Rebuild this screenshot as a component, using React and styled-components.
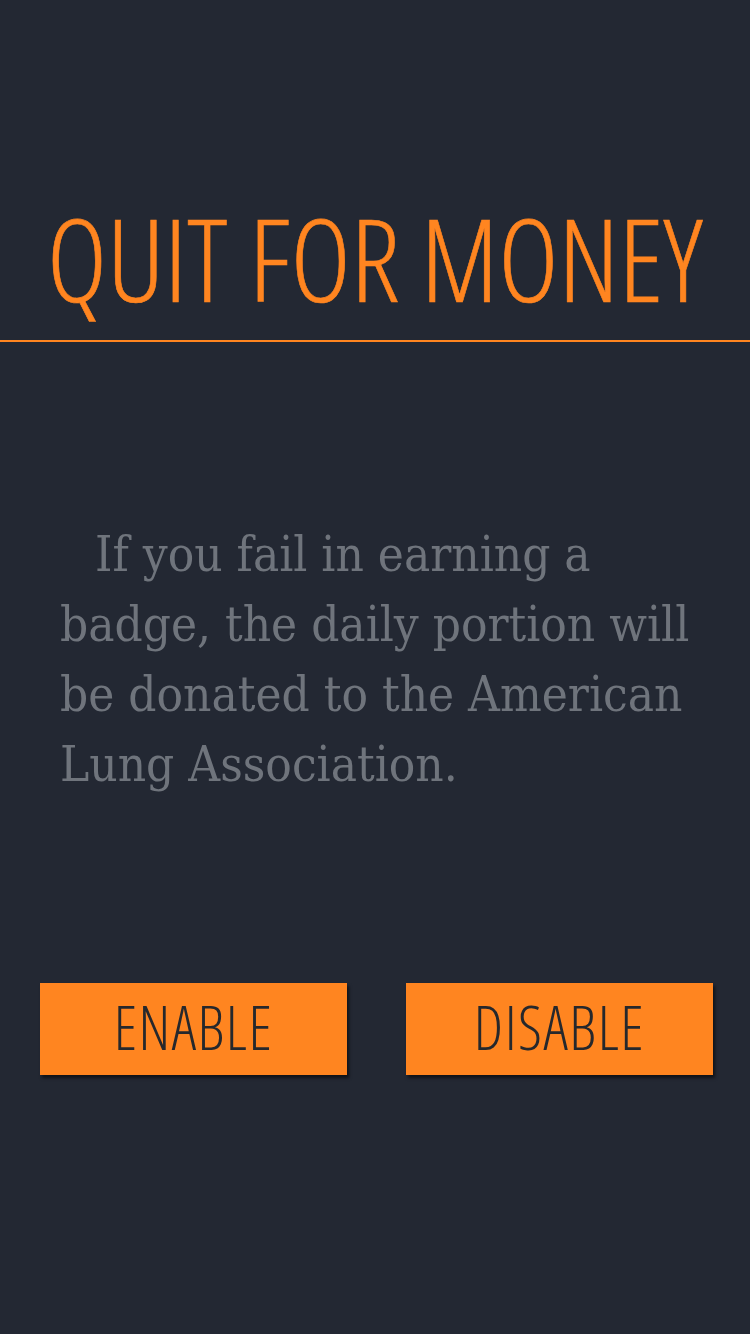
import styled, { createGlobalStyle } from "styled-components";

const GlobalStyle = createGlobalStyle`
  html, body {
    margin: 0;
    padding: 0;
    background-color: #232833;
  }
  * {
    box-sizing: border-box;
  }
`;

function App() {
  return (
    <Screen>
      <GlobalStyle />
      <Header>
        <Title>QUIT FOR MONEY</Title>
      </Header>
      <Description>
        If you fail in earning a badge, the daily portion will be donated to
        the American Lung Association.
      </Description>
      <ButtonRow>
        <ActionButton type="button">ENABLE</ActionButton>
        <ActionButton type="button">DISABLE</ActionButton>
      </ButtonRow>
    </Screen>
  );
}

const Screen = styled.main`
  width: 750px;
  min-height: 1334px;
  background-color: #232833;
  display: flex;
  flex-direction: column;
`;

const Header = styled.header`
  padding: 198px 0 22px;
  border-bottom: 2px solid #ff8520;
  display: flex;
  justify-content: center;
`;

const Title = styled.h1`
  margin: 0;
  font-family: "Open Sans", "DejaVu Sans", sans-serif;
  font-weight: 300;
  font-stretch: condensed;
  font-size: 114px;
  line-height: 120px;
  letter-spacing: 0.2px;
  color: #ff8520;
  white-space: nowrap;
  -webkit-text-stroke: 0.6px #ff8520;
`;

const Description = styled.p`
  margin: 178px 0 0 60px;
  width: 645px;
  font-family: "DejaVu Serif", "Liberation Serif", serif;
  font-stretch: condensed;
  font-size: 49px;
  line-height: 70px;
  text-indent: 35px;
  color: #6f747c;
`;

const ButtonRow = styled.div`
  margin-top: 183px;
  padding: 0 37px 0 40px;
  display: flex;
  justify-content: space-between;
`;

const ActionButton = styled.button`
  width: 307px;
  height: 92px;
  padding: 0 0 4px;
  border: none;
  border-radius: 0;
  background-color: #ff8520;
  box-shadow: 2px 3px 3px rgba(0, 0, 0, 0.55);
  display: flex;
  justify-content: center;
  align-items: center;
  font-family: "Open Sans", "DejaVu Sans", sans-serif;
  font-weight: 300;
  font-stretch: condensed;
  font-size: 60px;
  line-height: 60px;
  letter-spacing: 1.5px;
  color: #26282c;
  cursor: pointer;
`;

export default App;
